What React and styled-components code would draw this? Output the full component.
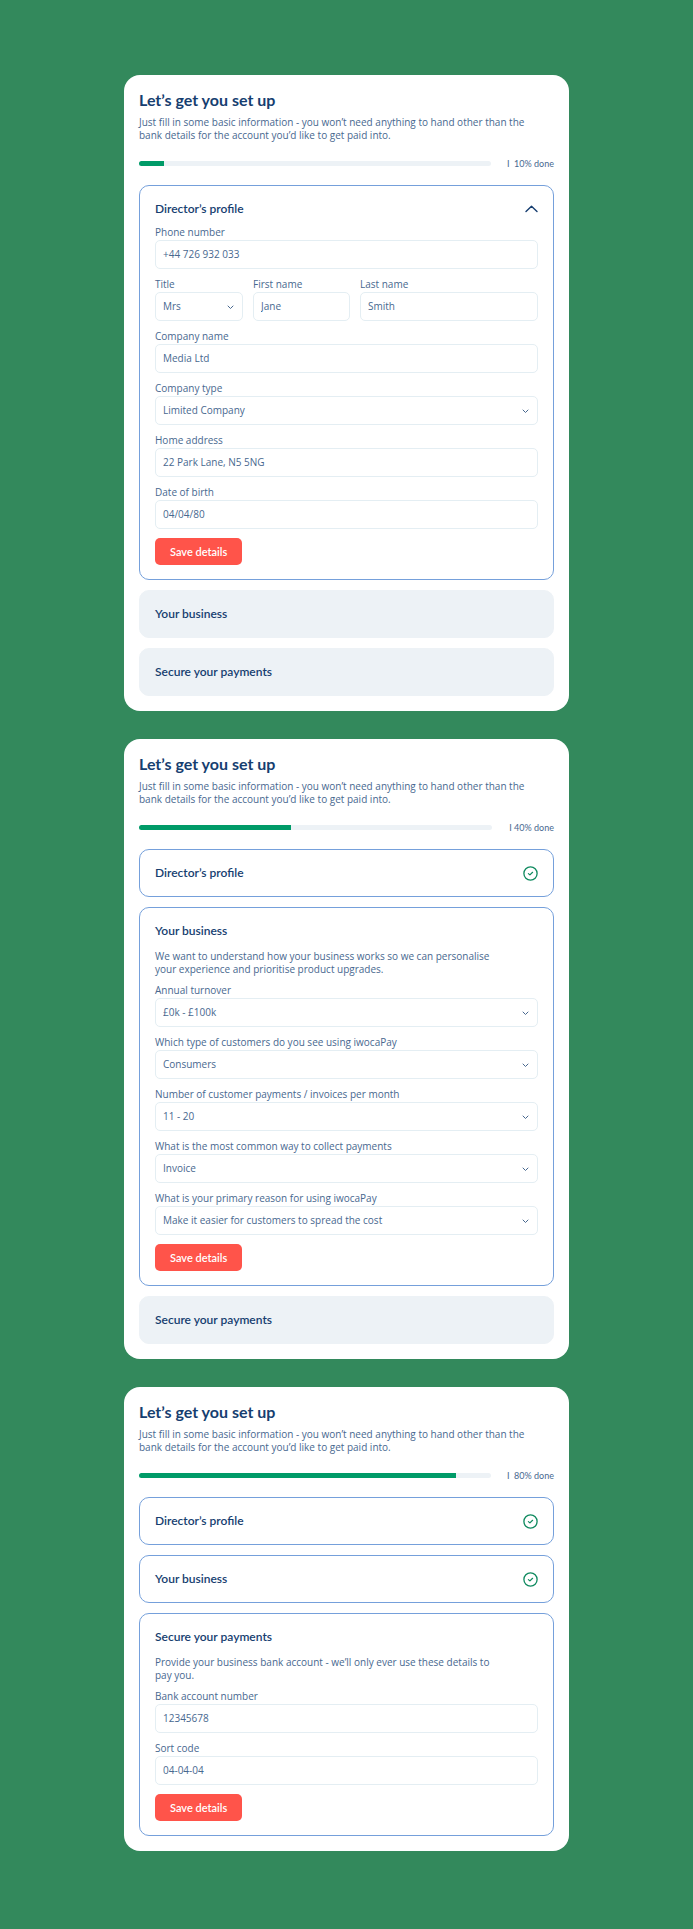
import React, { useId } from "react";
import styled, { createGlobalStyle, css } from "styled-components";

const color = {
  page: "#33895c",
  navy: "#163e70",
  text: "#48688f",
  line: "#e4eef3",
  panelLine: "#75a0db",
  muted: "#edf2f6",
  green: "#009b68",
  check: "#0f8a5f",
  red: "#ff544a",
};

const headingFont = `Lato, "Open Sans", sans-serif`;

const GlobalStyle = createGlobalStyle`
  *, *::before, *::after { box-sizing: border-box; }
  body {
    margin: 0;
    background: ${color.page};
    color: ${color.text};
    font-family: "Open Sans", sans-serif;
    font-size: 10px;
    line-height: 13px;
  }
  h1, h2, p { margin: 0; }
  button, input, select { font: inherit; color: inherit; }
`;

const Page = styled.main`
  display: flex;
  flex-direction: column;
  align-items: center;
  gap: 28px;
  padding: 75px 16px 77px;
`;

const Card = styled.section`
  width: 100%;
  max-width: 445px;
  padding: 15px;
  background: #fff;
  border-radius: 16px;
`;

const CardTitle = styled.h1`
  color: ${color.navy};
  font-family: ${headingFont};
  font-size: 16px;
  font-weight: 700;
  line-height: 20px;
`;

const CardIntro = styled.p`
  max-width: 396px;
  margin-top: 6px;
`;

const ProgressRow = styled.div`
  display: flex;
  align-items: center;
  gap: 16px;
  margin: 15px 0;
`;

const Track = styled.div`
  flex: 1;
  height: 5px;
  overflow: hidden;
  background: ${color.muted};
  border-radius: 3px;
`;

const Fill = styled.div`
  height: 100%;
  background: ${color.green};
`;

const ProgressLabel = styled.span`
  min-width: 46px;
  font-family: ${headingFont};
  font-size: 9px;
  text-align: right;
  white-space: pre;
`;

const Panels = styled.div`
  display: flex;
  flex-direction: column;
  gap: 10px;
`;

const Panel = styled.section`
  padding: 0 15px;
  border: 1px solid ${color.panelLine};
  border-radius: 10px;
  ${({ $locked }) =>
    $locked &&
    css`
      background: ${color.muted};
      border-color: ${color.muted};
    `}
`;

const PanelHeading = styled.h2`
  font-family: ${headingFont};
  font-size: 12px;
  line-height: 16px;
`;

const PanelToggle = styled.button`
  display: flex;
  align-items: center;
  justify-content: space-between;
  width: 100%;
  padding: ${({ $open }) => ($open ? "15px 0 9px" : "15px 0")};
  border: 0;
  background: none;
  color: ${color.navy};
  font-weight: 600;
  text-align: left;
`;

const PanelIntro = styled.p`
  max-width: 345px;
  padding: 2px 0 8px;
`;

const Form = styled.form`
  display: flex;
  flex-direction: column;
  gap: 9px;
  padding-bottom: 14px;
`;

const FieldRow = styled.div`
  display: grid;
  grid-template-columns: minmax(0, 88fr) minmax(0, 97fr) minmax(0, 178fr);
  gap: 10px;
`;

const FieldBox = styled.div`
  display: flex;
  flex-direction: column;
  gap: 2px;
`;

const Label = styled.label`
  line-height: 12px;
`;

const control = css`
  display: block;
  width: 100%;
  height: 29px;
  border: 1px solid ${color.line};
  border-radius: 5px;
  background: #fff;
  outline-color: ${color.panelLine};
`;

const TextInput = styled.input`
  ${control}
  padding: 0 7px 1px;
`;

const SelectWrap = styled.div`
  position: relative;
`;

const Select = styled.select`
  ${control}
  appearance: none;
  padding: 0 24px 0 7px;
`;

const SelectArrow = styled.svg`
  position: absolute;
  top: 50%;
  right: 9px;
  margin-top: -2px;
  pointer-events: none;
`;

const SaveButton = styled.button`
  align-self: flex-start;
  height: 27px;
  padding: 0 15px;
  border: 0;
  border-radius: 5px;
  background: ${color.red};
  color: #fff;
  font-family: ${headingFont};
  font-size: 11px;
  font-weight: 600;
  cursor: pointer;
`;

function Field({ label, value, options }) {
  const id = useId();
  return (
    <FieldBox>
      <Label htmlFor={id}>{label}</Label>
      {options ? (
        <SelectWrap>
          <Select id={id} defaultValue={options[0]}>
            {options.map((option) => (
              <option key={option}>{option}</option>
            ))}
          </Select>
          <SelectArrow width="7" height="5" viewBox="0 0 7 5" fill="none" aria-hidden="true">
            <path d="M1 1l2.5 2.5L6 1" stroke={color.text} strokeLinecap="round" strokeLinejoin="round" />
          </SelectArrow>
        </SelectWrap>
      ) : (
        <TextInput id={id} type="text" defaultValue={value} />
      )}
    </FieldBox>
  );
}

function CheckIcon() {
  return (
    <svg width="15" height="15" viewBox="0 0 15 15" fill="none" role="img" aria-label="Completed">
      <circle cx="7.5" cy="7.5" r="6.6" stroke={color.check} strokeWidth="1.3" />
      <path d="M5.4 7.6l1.5 1.3 2.7-2.6" stroke={color.check} strokeWidth="1.2" strokeLinecap="round" strokeLinejoin="round" />
    </svg>
  );
}

function ChevronUp() {
  return (
    <svg width="13" height="8" viewBox="0 0 13 8" fill="none" aria-hidden="true">
      <path d="M1 6.5l5.5-5.3L12 6.5" stroke={color.navy} strokeWidth="1.4" strokeLinecap="round" strokeLinejoin="round" />
    </svg>
  );
}

function Step({ title, state, collapsible, intro, children }) {
  const open = state === "open";
  return (
    <Panel $locked={state === "locked"}>
      <PanelHeading>
        <PanelToggle type="button" $open={open} aria-expanded={open} disabled={state === "locked"}>
          {title}
          {state === "done" && <CheckIcon />}
          {collapsible && <ChevronUp />}
        </PanelToggle>
      </PanelHeading>
      {intro && <PanelIntro>{intro}</PanelIntro>}
      {open && (
        <Form onSubmit={(event) => event.preventDefault()}>
          {children}
          <SaveButton type="submit">Save details</SaveButton>
        </Form>
      )}
    </Panel>
  );
}

function SetupCard({ fill, progress, progressText, children }) {
  return (
    <Card>
      <CardTitle>Let’s get you set up</CardTitle>
      <CardIntro>
        Just fill in some basic information - you won’t need anything to hand other than the
        bank details for the account you’d like to get paid into.
      </CardIntro>
      <ProgressRow>
        <Track role="progressbar" aria-label="Set up" aria-valuenow={progress} aria-valuemin={0} aria-valuemax={100}>
          <Fill style={{ width: `${fill}%` }} />
        </Track>
        <ProgressLabel>{progressText}</ProgressLabel>
      </ProgressRow>
      <Panels>{children}</Panels>
    </Card>
  );
}

export default function App() {
  return (
    <>
      <GlobalStyle />
      <Page>
        <SetupCard fill={7} progress={10} progressText="I  10% done">
          <Step title="Director’s profile" state="open" collapsible>
            <Field label="Phone number" value="+44 726 932 033" />
            <FieldRow>
              <Field label="Title" options={["Mrs"]} />
              <Field label="First name" value="Jane" />
              <Field label="Last name" value="Smith" />
            </FieldRow>
            <Field label="Company name" value="Media Ltd" />
            <Field label="Company type" options={["Limited Company"]} />
            <Field label="Home address" value="22 Park Lane, N5 5NG" />
            <Field label="Date of birth" value="04/04/80" />
          </Step>
          <Step title="Your business" state="locked" />
          <Step title="Secure your payments" state="locked" />
        </SetupCard>

        <SetupCard fill={43} progress={40} progressText="I 40% done">
          <Step title="Director’s profile" state="done" />
          <Step
            title="Your business"
            state="open"
            intro="We want to understand how your business works so we can personalise your experience and prioritise product upgrades."
          >
            <Field label="Annual turnover" options={["£0k - £100k"]} />
            <Field label="Which type of customers do you see using iwocaPay" options={["Consumers"]} />
            <Field label="Number of customer payments / invoices per month" options={["11 - 20"]} />
            <Field label="What is the most common way to collect payments" options={["Invoice"]} />
            <Field
              label="What is your primary reason for using iwocaPay"
              options={["Make it easier for customers to spread the cost"]}
            />
          </Step>
          <Step title="Secure your payments" state="locked" />
        </SetupCard>

        <SetupCard fill={90} progress={80} progressText="I  80% done">
          <Step title="Director’s profile" state="done" />
          <Step title="Your business" state="done" />
          <Step
            title="Secure your payments"
            state="open"
            intro="Provide your business bank account - we’ll only ever use these details to pay you."
          >
            <Field label="Bank account number" value="12345678" />
            <Field label="Sort code" value="04-04-04" />
          </Step>
        </SetupCard>
      </Page>
    </>
  );
}
